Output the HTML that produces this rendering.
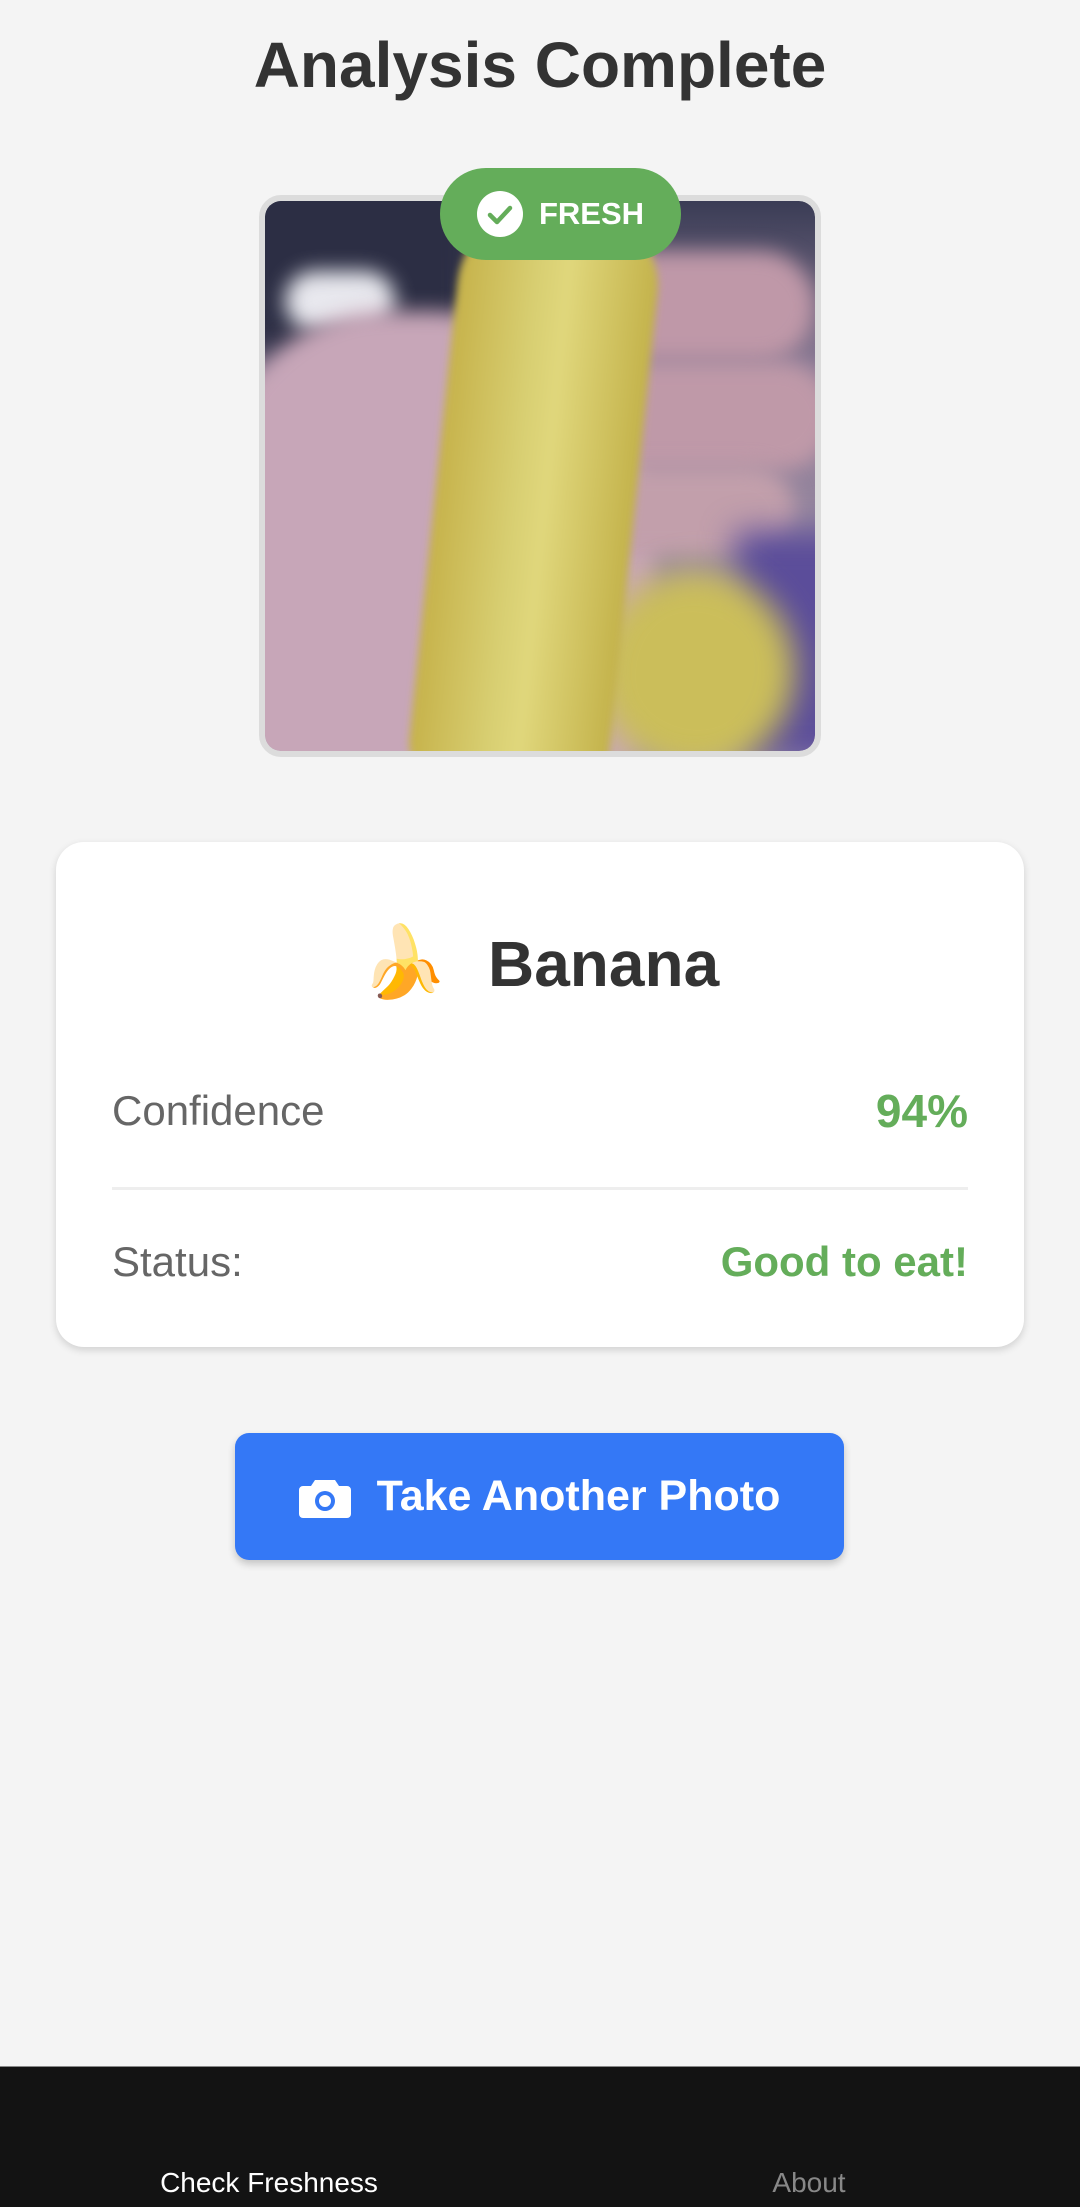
<!DOCTYPE html>
<html><head><meta charset="utf-8"><style>
html,body{margin:0;padding:0}
body{width:1080px;height:2206px;background:#f4f4f4;font-family:"Liberation Sans",Roboto,sans-serif;position:relative;overflow:hidden}
.title{position:absolute;top:28px;left:0;width:1080px;text-align:center;font-size:64px;font-weight:bold;color:#333}
.frame{position:absolute;left:259px;top:195px;width:550px;height:550px;border:6px solid #dcdcdc;border-radius:22px;background:#e0e0e0;overflow:hidden}
.photo{position:absolute;inset:0;border-radius:16px;overflow:hidden;background:linear-gradient(180deg,#3a3c55 0%,#8a7a95 30%,#a99aae 100%)}
.photo div{position:absolute}
.badge{position:absolute;left:440px;top:168px;width:241px;height:92px;border-radius:46px;background:#64ad5a;color:#fff;font-weight:bold;font-size:31px;display:flex;align-items:center;justify-content:center;gap:16px}
.card{position:absolute;left:56px;top:842px;width:968px;height:505px;background:#fff;border-radius:28px;box-shadow:0 3px 8px rgba(0,0,0,.15)}
.name{position:absolute;top:80px;left:0;width:100%;text-align:center;font-size:64px;font-weight:bold;color:#333}
.row{position:absolute;left:56px;right:56px;font-size:42px;color:#666;display:flex;justify-content:space-between;align-items:center}
.row b{color:#64ad5a}
.div{position:absolute;left:56px;right:56px;top:345px;height:3px;background:#eee}
.btn{position:absolute;left:235px;top:1433px;width:609px;height:127px;border-radius:14px;background:#3478f6;color:#fff;font-size:43px;font-weight:bold;display:flex;align-items:center;justify-content:center;gap:26px;box-shadow:0 4px 8px rgba(0,0,0,.2)}
.nav{position:absolute;left:0;top:2066px;width:1080px;height:140px;background:#131313;border-top:1px solid #888}
.nav span{position:absolute;top:100px;font-size:28px;transform:translateX(-50%)}
</style></head><body>
<div class="title">Analysis Complete</div>
<div class="frame"><div class="photo">
 <div style="left:-40px;top:-40px;width:260px;height:200px;background:#2c2e44;filter:blur(20px)"></div>
 <div style="left:20px;top:70px;width:110px;height:60px;background:#e8e8ee;border-radius:30px;filter:blur(10px)"></div>
 <div style="left:-60px;top:110px;width:450px;height:520px;background:#c7a6b8;border-radius:40% 50% 30% 30%;filter:blur(10px)"></div>
 <div style="left:280px;top:50px;width:270px;height:110px;background:#bf98a8;border-radius:55px;filter:blur(10px)"></div>
 <div style="left:290px;top:160px;width:280px;height:110px;background:#bf99a8;border-radius:55px;filter:blur(10px)"></div>
 <div style="left:300px;top:265px;width:230px;height:90px;background:#c29fab;border-radius:45px;filter:blur(10px)"></div>
 <div style="left:470px;top:330px;width:120px;height:230px;background:#5b4d9a;filter:blur(16px)"></div>
 <div style="left:330px;top:370px;width:200px;height:200px;background:#cbbe5a;border-radius:50%;filter:blur(16px);transform:rotate(-30deg)"></div>
 <div style="left:170px;top:10px;width:200px;height:580px;background:linear-gradient(90deg,#c6b24a,#d8cf72 40%,#e0d77c 55%,#c3b24a);border-radius:80px 70px 40px 40px;transform:rotate(6deg);filter:blur(4px)"></div>
</div></div>
<div class="badge"><svg width="46" height="46" viewBox="0 0 46 46"><circle cx="23" cy="23" r="23" fill="#fff"/><path d="M13 24l7 7 13-14" stroke="#64ad5a" stroke-width="4.5" fill="none" stroke-linecap="round" stroke-linejoin="round"/></svg>FRESH</div>
<div class="card">
 <div class="name"><span style="font-family:'Noto Color Emoji',sans-serif;font-size:70px;margin-right:40px">🍌</span>Banana</div>
 <div class="row" style="top:242px"><span>Confidence</span><b style="font-size:46px">94%</b></div>
 <div class="div"></div>
 <div class="row" style="top:396px"><span>Status:</span><b>Good to eat!</b></div>
</div>
<div class="btn"><svg width="52" height="42" viewBox="0 0 52 42"><path d="M16 4h20l4 6h8a4 4 0 0 1 4 4v24a4 4 0 0 1-4 4H4a4 4 0 0 1-4-4V14a4 4 0 0 1 4-4h8z" fill="#fff"/><circle cx="26" cy="25" r="10" fill="#3478f6"/><circle cx="26" cy="25" r="6" fill="#fff"/></svg>Take Another Photo</div>
<div class="nav"><span style="left:269px;color:#fff">Check Freshness</span><span style="left:809px;color:#888">About</span></div>
</body></html>
